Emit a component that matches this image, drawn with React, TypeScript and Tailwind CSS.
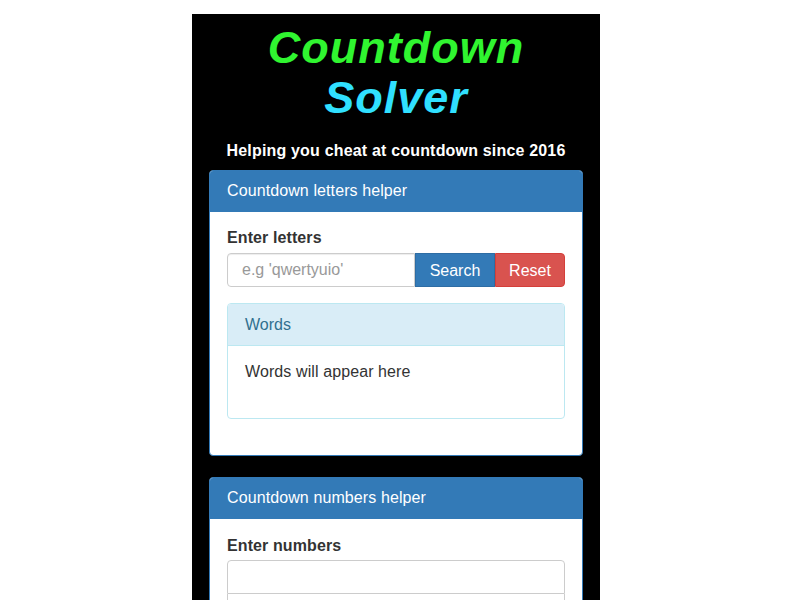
import React from 'react';

const font = { fontFamily: '"Liberation Sans", Arial, Helvetica, sans-serif' };

function Panel({ title, children }: { title: string; children: React.ReactNode }) {
  return (
    <div className="border border-[#337ab7] rounded-[4px] bg-white overflow-hidden">
      <div className="bg-[#337ab7] text-white px-[17px] pt-[10px] pb-[10px] text-[16px] leading-[20px] tracking-[0.1px] border-b border-[#337ab7]">
        {title}
      </div>
      <div className="px-[17px] pt-[16px] pb-[16px]">{children}</div>
    </div>
  );
}

export default function App() {
  return (
    <div className="min-h-screen bg-white pt-[14px]" style={font}>
      <div className="ml-[192px] w-[408px] bg-black px-[17px] pb-[40px] min-h-[700px]">
        <h1 className="pt-[9px] text-center font-bold italic text-[45px] leading-[1.1] tracking-[1px]">
          <span className="block text-[#30f530]">Countdown</span>
          <span className="block text-[#30e0ff]">Solver</span>
        </h1>
        <p className="mt-[19px] mb-[9px] text-center text-white font-bold text-[16px] leading-[20px] tracking-[0.18px]">
          Helping you cheat at countdown since 2016
        </p>

        <Panel title="Countdown letters helper">
          <label className="block font-bold text-[16px] leading-[20px] tracking-[0.1px] text-[#333] mb-[5px]">Enter letters</label>
          <div className="flex h-[34px] mb-[16px]">
            <input
              className="flex-1 min-w-0 h-[34px] border border-[#ccc] rounded-l-[4px] px-[14px] text-[16px] text-[#555] placeholder:text-[#999] outline-none shadow-[inset_0_1px_1px_rgba(0,0,0,0.075)]"
              placeholder="e.g 'qwertyuio'"
            />
            <button className="w-[80px] h-[34px] pt-[1px] bg-[#337ab7] border border-[#2e6da4] text-white text-[16px]">Search</button>
            <button className="w-[70px] h-[34px] pt-[1px] bg-[#d9534f] border border-[#d43f3a] text-white text-[16px] rounded-r-[4px]">Reset</button>
          </div>
          <div className="border border-[#bce8f1] rounded-[4px] overflow-hidden">
            <div className="bg-[#d9edf7] text-[#31708f] px-[17px] pt-[11px] pb-[10px] text-[16px] leading-[20px] border-b border-[#bce8f1]">
              Words
            </div>
            <div className="px-[17px] pt-[16px] pb-[36px] text-[16px] leading-[20px] text-[#333] tracking-[0.1px]">
              Words will appear here
            </div>
          </div>
          <div className="h-[20px]" />
        </Panel>

        <div className="h-[21px]" />

        <Panel title="Countdown numbers helper">
          <label className="block font-bold text-[16px] leading-[20px] tracking-[0.1px] text-[#333] mt-[1px] mb-[4px]">Enter numbers</label>
          <div className="flex flex-col">
            <input className="h-[34px] border border-[#ccc] rounded-t-[4px] px-[12px] text-[16px] outline-none" />
            <input className="h-[34px] border border-[#ccc] border-t-0 px-[12px] text-[16px] outline-none" />
            <input className="h-[34px] border border-[#ccc] border-t-0 px-[12px] text-[16px] outline-none" />
            <input className="h-[34px] border border-[#ccc] border-t-0 rounded-b-[4px] px-[12px] text-[16px] outline-none" />
          </div>
        </Panel>
      </div>
    </div>
  );
}
